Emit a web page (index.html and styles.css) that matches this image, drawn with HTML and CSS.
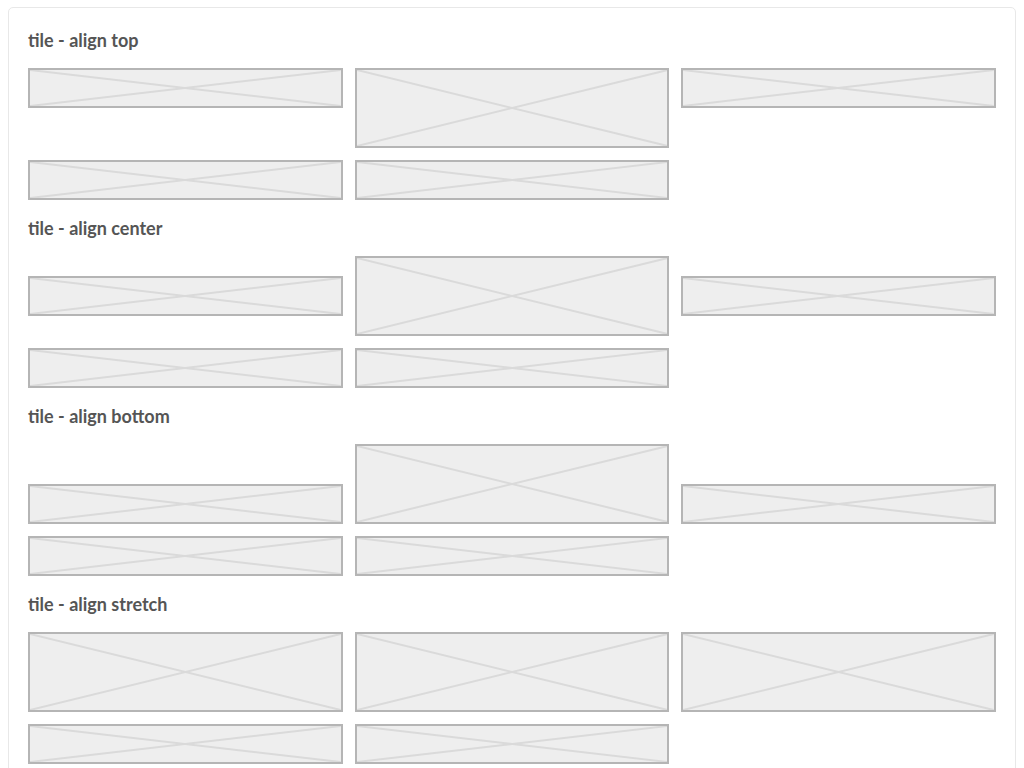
FILE: index.html
```html
<!DOCTYPE html>
<html>
<head>
<meta charset="utf-8">
<link rel="stylesheet" href="styles.css">
</head>
<body>
<div class="card">
  <section class="section">
    <h2 class="title">tile - align top</h2>
    <div class="grid align-top">
      <div class="ph h40"><svg viewBox="0 0 100 100" preserveAspectRatio="none"><line x1="0" y1="0" x2="100" y2="100"/><line x1="0" y1="100" x2="100" y2="0"/></svg></div>
      <div class="ph h80"><svg viewBox="0 0 100 100" preserveAspectRatio="none"><line x1="0" y1="0" x2="100" y2="100"/><line x1="0" y1="100" x2="100" y2="0"/></svg></div>
      <div class="ph h40"><svg viewBox="0 0 100 100" preserveAspectRatio="none"><line x1="0" y1="0" x2="100" y2="100"/><line x1="0" y1="100" x2="100" y2="0"/></svg></div>
      <div class="ph h40"><svg viewBox="0 0 100 100" preserveAspectRatio="none"><line x1="0" y1="0" x2="100" y2="100"/><line x1="0" y1="100" x2="100" y2="0"/></svg></div>
      <div class="ph h40"><svg viewBox="0 0 100 100" preserveAspectRatio="none"><line x1="0" y1="0" x2="100" y2="100"/><line x1="0" y1="100" x2="100" y2="0"/></svg></div>
    </div>
  </section>
  <section class="section">
    <h2 class="title">tile - align center</h2>
    <div class="grid align-center">
      <div class="ph h40"><svg viewBox="0 0 100 100" preserveAspectRatio="none"><line x1="0" y1="0" x2="100" y2="100"/><line x1="0" y1="100" x2="100" y2="0"/></svg></div>
      <div class="ph h80"><svg viewBox="0 0 100 100" preserveAspectRatio="none"><line x1="0" y1="0" x2="100" y2="100"/><line x1="0" y1="100" x2="100" y2="0"/></svg></div>
      <div class="ph h40"><svg viewBox="0 0 100 100" preserveAspectRatio="none"><line x1="0" y1="0" x2="100" y2="100"/><line x1="0" y1="100" x2="100" y2="0"/></svg></div>
      <div class="ph h40"><svg viewBox="0 0 100 100" preserveAspectRatio="none"><line x1="0" y1="0" x2="100" y2="100"/><line x1="0" y1="100" x2="100" y2="0"/></svg></div>
      <div class="ph h40"><svg viewBox="0 0 100 100" preserveAspectRatio="none"><line x1="0" y1="0" x2="100" y2="100"/><line x1="0" y1="100" x2="100" y2="0"/></svg></div>
    </div>
  </section>
  <section class="section">
    <h2 class="title">tile - align bottom</h2>
    <div class="grid align-bottom">
      <div class="ph h40"><svg viewBox="0 0 100 100" preserveAspectRatio="none"><line x1="0" y1="0" x2="100" y2="100"/><line x1="0" y1="100" x2="100" y2="0"/></svg></div>
      <div class="ph h80"><svg viewBox="0 0 100 100" preserveAspectRatio="none"><line x1="0" y1="0" x2="100" y2="100"/><line x1="0" y1="100" x2="100" y2="0"/></svg></div>
      <div class="ph h40"><svg viewBox="0 0 100 100" preserveAspectRatio="none"><line x1="0" y1="0" x2="100" y2="100"/><line x1="0" y1="100" x2="100" y2="0"/></svg></div>
      <div class="ph h40"><svg viewBox="0 0 100 100" preserveAspectRatio="none"><line x1="0" y1="0" x2="100" y2="100"/><line x1="0" y1="100" x2="100" y2="0"/></svg></div>
      <div class="ph h40"><svg viewBox="0 0 100 100" preserveAspectRatio="none"><line x1="0" y1="0" x2="100" y2="100"/><line x1="0" y1="100" x2="100" y2="0"/></svg></div>
    </div>
  </section>
  <section class="section">
    <h2 class="title">tile - align stretch</h2>
    <div class="grid align-stretch">
      <div class="ph min40"><svg viewBox="0 0 100 100" preserveAspectRatio="none"><line x1="0" y1="0" x2="100" y2="100"/><line x1="0" y1="100" x2="100" y2="0"/></svg></div>
      <div class="ph h80"><svg viewBox="0 0 100 100" preserveAspectRatio="none"><line x1="0" y1="0" x2="100" y2="100"/><line x1="0" y1="100" x2="100" y2="0"/></svg></div>
      <div class="ph min40"><svg viewBox="0 0 100 100" preserveAspectRatio="none"><line x1="0" y1="0" x2="100" y2="100"/><line x1="0" y1="100" x2="100" y2="0"/></svg></div>
      <div class="ph h40"><svg viewBox="0 0 100 100" preserveAspectRatio="none"><line x1="0" y1="0" x2="100" y2="100"/><line x1="0" y1="100" x2="100" y2="0"/></svg></div>
      <div class="ph h40"><svg viewBox="0 0 100 100" preserveAspectRatio="none"><line x1="0" y1="0" x2="100" y2="100"/><line x1="0" y1="100" x2="100" y2="0"/></svg></div>
    </div>
  </section>
</div>
</body>
</html>
```
FILE: styles.css
```css
html, body {
  margin: 0;
  padding: 0;
  background: #ffffff;
}
body {
  padding: 7px 8px 8px 8px;
  font-family: Lato, "Liberation Sans", sans-serif;
}
.card {
  border: 1px solid #e8e8e8;
  border-radius: 5px;
  padding: 20px 19px 19px 19px;
  background: #fff;
}
.section + .section {
  margin-top: 16px;
}
.title {
  margin: 0 0 16px 0;
  font-size: 18px;
  line-height: 24px;
  font-weight: 700;
  color: #555555;
}
.grid {
  display: grid;
  grid-template-columns: repeat(3, 1fr);
  gap: 12px;
}
.align-top { align-items: start; }
.align-center { align-items: center; }
.align-bottom { align-items: end; }
.align-stretch { align-items: stretch; }
.ph {
  box-sizing: border-box;
  border: 2px solid #b5b5b5;
  background: #eeeeee;
  position: relative;
}
.ph svg {
  display: block;
  width: 100%;
  height: 100%;
  position: absolute;
  inset: 0;
}
.ph line {
  stroke: #dadada;
  stroke-width: 2;
  vector-effect: non-scaling-stroke;
}
.h40 { height: 40px; }
.h80 { height: 80px; }
.min40 { min-height: 40px; }
```
